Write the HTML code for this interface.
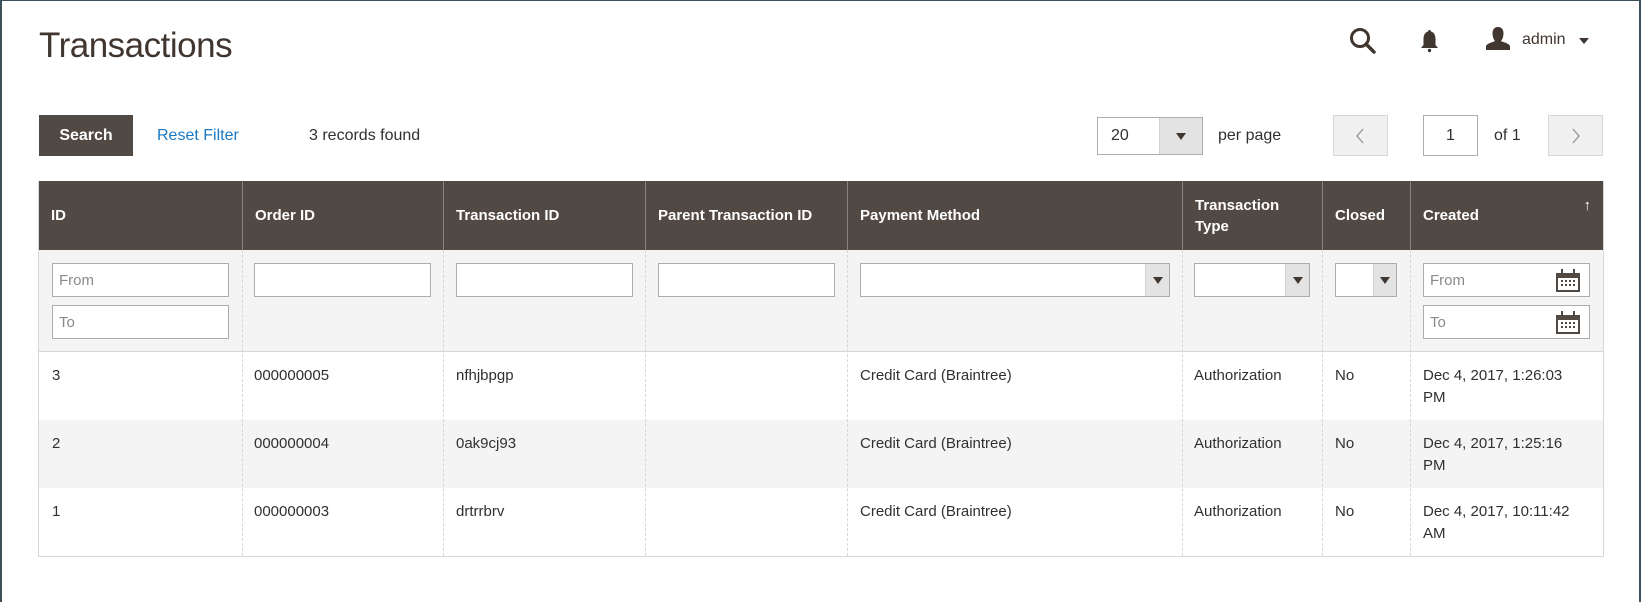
<!DOCTYPE html>
<html><head><meta charset="utf-8"><style>
*{box-sizing:border-box;margin:0;padding:0}
body{width:1641px;height:602px;background:#fff;font-family:"Liberation Sans",sans-serif;color:#303030;position:relative;overflow:hidden;border-top:1px solid #3d4f58;border-left:2px solid #3d4f58;border-right:2px solid #3d4f58}
.a{position:absolute}
h1{position:absolute;left:37px;top:25px;font-weight:normal;font-size:35px;color:#41362f;letter-spacing:-0.5px}
.btn{left:37px;top:114px;width:94px;height:41px;background:#514943;color:#fff;font-weight:bold;font-size:16px;line-height:41px;text-align:center}
.t{font-size:16px}
.inp{background:#fff;border:1px solid #adadad}
.ph{color:#8a8a8a;font-size:15px}
.sel{background:#fff;border:1px solid #adadad}
.sel .ar{position:absolute;right:0;top:0;bottom:0;background:#e3e3e3;border-left:1px solid #d0d0d0}
.sel .ar:after{content:"";position:absolute;left:50%;top:50%;margin-left:-5px;margin-top:-3px;border-left:5px solid transparent;border-right:5px solid transparent;border-top:7px solid #41362f}
.hd{top:180px;height:69px;background:#514943;color:#fff;font-weight:bold;font-size:15px;border-left:1px solid #8a837e;padding-left:12px;display:flex;align-items:center;line-height:21px}
.fl{top:249px;height:102px;background:#f4f4f4}
.vl{width:0;border-left:1px dashed #d6d6d6}
.cell{font-size:15px;line-height:22px}
</style></head><body>
<h1>Transactions</h1>
<svg class="a" style="left:1347px;top:26px" width="28" height="28" viewBox="0 0 28 28"><circle cx="11" cy="11" r="8.5" fill="none" stroke="#41362f" stroke-width="3"/><line x1="17" y1="17" x2="25" y2="25" stroke="#41362f" stroke-width="3.5" stroke-linecap="round"/></svg>
<svg class="a" style="left:1417px;top:28px" width="21" height="24" viewBox="0 0 21 24"><path d="M10.5 1c-1 0-1.5.7-1.5 1.5C5.5 3.5 4.5 7 4.5 10v6L2 19h17l-2.5-3v-6c0-3-1-6.5-4.5-7.5 0-.8-.5-1.5-1.5-1.5z" fill="#41362f"/><circle cx="10.5" cy="21.5" r="1.7" fill="#41362f"/></svg>
<svg class="a" style="left:1483px;top:26px" width="26" height="23" viewBox="0 0 26 23"><path d="M13 0c-4 0-5.5 3-5.5 6.5S9 13 10 14c-1 1-8 2-9 5v4h24v-4c-1-3-8-4-9-5 1-1 2.5-4 2.5-7.5S17 0 13 0z" fill="#41362f"/></svg>
<div class="a t" style="left:1520px;top:30px;color:#41362f">admin</div>
<div class="a" style="left:1577px;top:37px;border-left:5px solid transparent;border-right:5px solid transparent;border-top:6px solid #41362f"></div>

<div class="a btn">Search</div>
<div class="a t" style="left:155px;top:126px;color:#1979c3">Reset Filter</div>
<div class="a t" style="left:307px;top:126px">3 records found</div>

<div class="a sel" style="left:1095px;top:116px;width:106px;height:38px"><span class="a t" style="left:13px;top:9px">20</span><div class="ar" style="width:43px"></div></div>
<div class="a t" style="left:1216px;top:126px">per page</div>
<div class="a" style="left:1331px;top:114px;width:55px;height:41px;background:#f0f0f0;border:1px solid #d6d6d6"><svg class="a" style="left:21px;top:12px" width="10" height="16"><path d="M8 1L2 8l6 7" fill="none" stroke="#a0a0a0" stroke-width="1.5"/></svg></div>
<div class="a inp" style="left:1421px;top:114px;width:55px;height:41px"><span class="a t" style="left:22px;top:11px">1</span></div>
<div class="a t" style="left:1492px;top:126px">of 1</div>
<div class="a" style="left:1546px;top:114px;width:55px;height:41px;background:#f0f0f0;border:1px solid #d6d6d6"><svg class="a" style="left:22px;top:12px" width="10" height="16"><path d="M2 1l6 7-6 7" fill="none" stroke="#a0a0a0" stroke-width="1.5"/></svg></div>

<div class="a hd" style="left:37px;width:203px;border-left:0">ID</div>
<div class="a hd" style="left:240px;width:201px">Order ID</div>
<div class="a hd" style="left:441px;width:202px">Transaction ID</div>
<div class="a hd" style="left:643px;width:202px">Parent Transaction ID</div>
<div class="a hd" style="left:845px;width:335px">Payment Method</div>
<div class="a hd" style="left:1180px;width:140px">Transaction<br>Type</div>
<div class="a hd" style="left:1320px;width:88px">Closed</div>
<div class="a hd" style="left:1408px;width:193px">Created<span class="a" style="right:12px;top:14px;font-weight:normal">↑</span></div>

<div class="a fl" style="left:37px;width:1564px"></div>
<div class="a inp" style="left:50px;top:262px;width:177px;height:34px"><span class="a ph" style="left:6px;top:8px">From</span></div>
<div class="a inp" style="left:50px;top:304px;width:177px;height:34px"><span class="a ph" style="left:6px;top:8px">To</span></div>
<div class="a inp" style="left:252px;top:262px;width:177px;height:34px"></div>
<div class="a inp" style="left:454px;top:262px;width:177px;height:34px"></div>
<div class="a inp" style="left:656px;top:262px;width:177px;height:34px"></div>
<div class="a sel" style="left:858px;top:262px;width:310px;height:34px"><div class="ar" style="width:24px"></div></div>
<div class="a sel" style="left:1192px;top:262px;width:116px;height:34px"><div class="ar" style="width:24px"></div></div>
<div class="a sel" style="left:1333px;top:262px;width:62px;height:34px"><div class="ar" style="width:23px"></div></div>
<div class="a inp" style="left:1421px;top:262px;width:167px;height:34px"><span class="a ph" style="left:6px;top:8px">From</span></div>
<div class="a inp" style="left:1421px;top:304px;width:167px;height:34px"><span class="a ph" style="left:6px;top:8px">To</span></div>
<svg class="a" style="left:1553px;top:268px" width="26" height="24" viewBox="0 0 26 24"><rect x="1" y="4" width="24" height="19" fill="#514943"/><rect x="3" y="9" width="20" height="12" fill="#fff"/><g fill="#514943"><rect x="6" y="11" width="2" height="2"/><rect x="10" y="11" width="2" height="2"/><rect x="14" y="11" width="2" height="2"/><rect x="18" y="11" width="2" height="2"/><rect x="6" y="15" width="2" height="2"/><rect x="10" y="15" width="2" height="2"/><rect x="14" y="15" width="2" height="2"/><rect x="18" y="15" width="2" height="2"/></g><rect x="6" y="0" width="2" height="7" fill="#514943"/><rect x="18" y="0" width="2" height="7" fill="#514943"/></svg>
<svg class="a" style="left:1553px;top:310px" width="26" height="24" viewBox="0 0 26 24"><rect x="1" y="4" width="24" height="19" fill="#514943"/><rect x="3" y="9" width="20" height="12" fill="#fff"/><g fill="#514943"><rect x="6" y="11" width="2" height="2"/><rect x="10" y="11" width="2" height="2"/><rect x="14" y="11" width="2" height="2"/><rect x="18" y="11" width="2" height="2"/><rect x="6" y="15" width="2" height="2"/><rect x="10" y="15" width="2" height="2"/><rect x="14" y="15" width="2" height="2"/><rect x="18" y="15" width="2" height="2"/></g><rect x="6" y="0" width="2" height="7" fill="#514943"/><rect x="18" y="0" width="2" height="7" fill="#514943"/></svg>

<div class="a" style="left:37px;top:419px;width:1564px;height:68px;background:#f4f4f4"></div>
<div class="a" style="left:37px;top:350px;width:1564px;border-top:1px solid #d6d6d6"></div>
<div class="a" style="left:36px;top:180px;width:1566px;height:376px;border:1px solid #d6d6d6;border-top:0"></div>
<div class="a vl" style="left:240px;top:249px;height:306px"></div>
<div class="a vl" style="left:441px;top:249px;height:306px"></div>
<div class="a vl" style="left:643px;top:249px;height:306px"></div>
<div class="a vl" style="left:845px;top:249px;height:306px"></div>
<div class="a vl" style="left:1180px;top:249px;height:306px"></div>
<div class="a vl" style="left:1320px;top:249px;height:306px"></div>
<div class="a vl" style="left:1408px;top:249px;height:306px"></div>

<div class="a cell" style="left:50px;top:364px">3</div>
<div class="a cell" style="left:252px;top:364px">000000005</div>
<div class="a cell" style="left:454px;top:364px">nfhjbpgp</div>
<div class="a cell" style="left:858px;top:364px">Credit Card (Braintree)</div>
<div class="a cell" style="left:1192px;top:364px">Authorization</div>
<div class="a cell" style="left:1333px;top:364px">No</div>
<div class="a cell" style="left:1421px;top:364px">Dec 4, 2017, 1:26:03<br>PM</div>

<div class="a cell" style="left:50px;top:432px">2</div>
<div class="a cell" style="left:252px;top:432px">000000004</div>
<div class="a cell" style="left:454px;top:432px">0ak9cj93</div>
<div class="a cell" style="left:858px;top:432px">Credit Card (Braintree)</div>
<div class="a cell" style="left:1192px;top:432px">Authorization</div>
<div class="a cell" style="left:1333px;top:432px">No</div>
<div class="a cell" style="left:1421px;top:432px">Dec 4, 2017, 1:25:16<br>PM</div>

<div class="a cell" style="left:50px;top:500px">1</div>
<div class="a cell" style="left:252px;top:500px">000000003</div>
<div class="a cell" style="left:454px;top:500px">drtrrbrv</div>
<div class="a cell" style="left:858px;top:500px">Credit Card (Braintree)</div>
<div class="a cell" style="left:1192px;top:500px">Authorization</div>
<div class="a cell" style="left:1333px;top:500px">No</div>
<div class="a cell" style="left:1421px;top:500px">Dec 4, 2017, 10:11:42<br>AM</div>
</body></html>
